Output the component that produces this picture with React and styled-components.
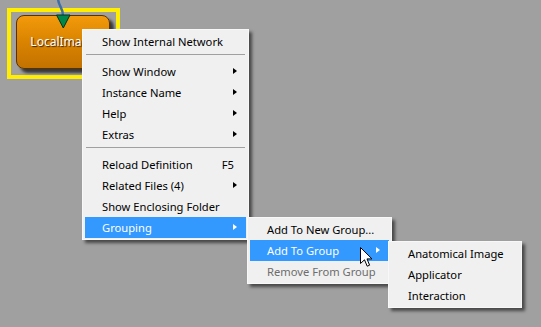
import React from "react";
import styled, { createGlobalStyle } from "styled-components";

const Global = createGlobalStyle`
  html, body { margin: 0; padding: 0; background: #a0a0a0; }
  body { font-family: "Noto Sans", "Liberation Sans", sans-serif; }
`;

const Canvas = styled.div`
  position: relative;
  width: 541px;
  height: 327px;
  overflow: hidden;
  background: #a0a0a0;
`;

const SelectionFrame = styled.div`
  position: absolute;
  left: 7px;
  top: 8px;
  width: 105px;
  height: 63px;
  border: 4px solid #ffee00;
`;

const Node = styled.div`
  position: absolute;
  left: 16px;
  top: 15px;
  width: 92px;
  height: 50px;
  border: 1px solid #5a3200;
  border-radius: 8px;
  background: linear-gradient(#f39a0c, #dc8500 45%, #c27200);
  box-shadow: 4px 4px 3px rgba(0, 0, 0, 0.65);
  display: flex;
  align-items: center;
  justify-content: center;
  color: #ffffff;
  font-size: 12px;
  text-shadow: 1px 1px 1px #3a2000;
  padding-bottom: 2px;
  box-sizing: content-box;
`;

const Wire = styled.svg`
  position: absolute;
  left: 0;
  top: 0;
  overflow: visible;
`;

const Menu = styled.div`
  position: absolute;
  left: ${(p) => p.$x}px;
  top: ${(p) => p.$y}px;
  width: ${(p) => p.$w}px;
  box-sizing: border-box;
  background: #f0f0f0;
  border: 1px solid #f8f8f8;
  padding: 1px 2px;
  box-shadow: 3px 3px 3px rgba(0, 0, 0, 0.55);
  display: flex;
  flex-direction: column;
`;

const Item = styled.div`
  height: 21px;
  box-sizing: border-box;
  display: flex;
  align-items: center;
  padding: 0 8px 1px 17px;
  font-size: 11.2px;
  color: ${(p) => (p.$disabled ? "#6d6d6d" : p.$active ? "#ffffff" : "#000000")};
  background: ${(p) => (p.$active ? "#3399ff" : "transparent")};
  white-space: nowrap;
`;

const Label = styled.span`
  flex: 1;
`;

const Shortcut = styled.span`
  margin-right: 4px;
`;

const Arrow = styled.span`
  width: 0;
  height: 0;
  border-top: 3.5px solid transparent;
  border-bottom: 3.5px solid transparent;
  border-left: 4px solid ${(p) => (p.$active ? "#ffffff" : "#000000")};
  margin-right: 1px;
`;

const Separator = styled.div`
  height: 9px;
  display: flex;
  flex-direction: column;
  padding: 0 1px;
  &::before {
    content: "";
    margin-top: 2px;
    height: 1px;
    background: #a0a0a0;
  }
`;

const Cursor = styled.svg`
  position: absolute;
  left: 360px;
  top: 247px;
`;

function MenuItem({ label, shortcut, sub, active, disabled }) {
  return (
    <Item $active={active} $disabled={disabled}>
      <Label>{label}</Label>
      {shortcut && <Shortcut>{shortcut}</Shortcut>}
      {sub && <Arrow $active={active} />}
    </Item>
  );
}

export default function App() {
  return (
    <Canvas>
      <Global />
      <SelectionFrame />
      <Node>LocalImage</Node>
      <Wire width="80" height="30">
        <path d="M58 -2 C58 6, 63 7, 63 16" fill="none" stroke="#3d6fa6" strokeWidth="2.5" />
        <polygon points="56.5,15 70,15 63.3,28" fill="#00874a" stroke="#00331c" strokeWidth="1" />
      </Wire>

      <Menu $x={82} $y={29} $w={167}>
        <MenuItem label="Show Internal Network" />
        <Separator />
        <MenuItem label="Show Window" sub />
        <MenuItem label="Instance Name" sub />
        <MenuItem label="Help" sub />
        <MenuItem label="Extras" sub />
        <Separator />
        <MenuItem label="Reload Definition" shortcut="F5" />
        <MenuItem label="Related Files (4)" sub />
        <MenuItem label="Show Enclosing Folder" />
        <MenuItem label="Grouping" sub active />
      </Menu>

      <Menu $x={247} $y={217} $w={145}>
        <MenuItem label="Add To New Group..." />
        <MenuItem label="Add To Group" sub active />
        <MenuItem label="Remove From Group" disabled />
      </Menu>

      <Menu $x={388} $y={241} $w={134}>
        <MenuItem label="Anatomical Image" />
        <MenuItem label="Applicator" />
        <MenuItem label="Interaction" />
      </Menu>

      <Cursor width="13" height="21" viewBox="0 0 13 21">
        <path
          d="M0.5 0.5 L0.5 16.5 L4.5 12.8 L7.2 19.2 L9.6 18.2 L7 11.9 L12 11.9 Z"
          fill="#ffffff"
          stroke="#000000"
          strokeWidth="1"
          strokeLinejoin="miter"
        />
      </Cursor>
    </Canvas>
  );
}
